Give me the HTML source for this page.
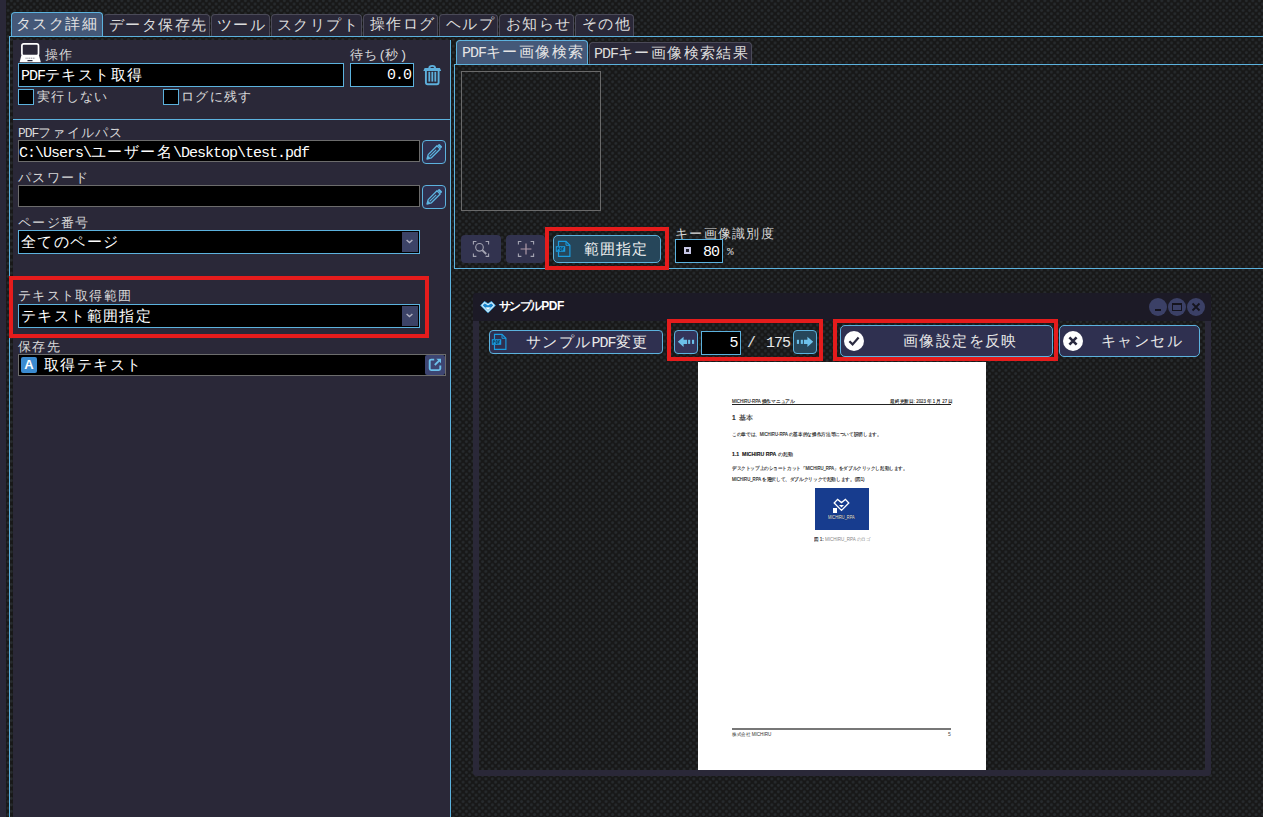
<!DOCTYPE html>
<html><head><meta charset="utf-8">
<style>
*{box-sizing:border-box;margin:0;padding:0}
html,body{width:1263px;height:817px;overflow:hidden}
body{position:relative;font-family:"Liberation Sans",sans-serif;color:#dcdcdc;
background-color:#181818;
background-image:radial-gradient(circle,#272b2e 0,#272b2e 0.9px,rgba(39,43,46,0) 2px),radial-gradient(circle,#272b2e 0,#272b2e 0.9px,rgba(39,43,46,0) 2px);
background-size:6.5px 6.488px,6.5px 6.488px;background-position:4.85px 0.76px,1.6px 4px}
.a{position:absolute}
.pat{background-color:#181818;
background-image:radial-gradient(circle,#272b2e 0,#272b2e 0.9px,rgba(39,43,46,0) 2px),radial-gradient(circle,#272b2e 0,#272b2e 0.9px,rgba(39,43,46,0) 2px);
background-size:6.5px 6.488px,6.5px 6.488px;background-position:4.85px 0.76px,1.6px 4px}
.t{position:absolute;white-space:nowrap;font-size:15px;line-height:16px;letter-spacing:1.4px}
.m{font-family:"Liberation Mono",monospace;letter-spacing:-1px}
.lb{position:absolute;white-space:nowrap;font-size:13px;line-height:13px;letter-spacing:1.25px;color:#d8d8d8}
.lb .m{letter-spacing:-1.1px}
.tab{position:absolute;top:14px;height:22px;background:#2a2838;border:1px solid #4b4a58;border-bottom:none;border-radius:4px 4px 0 0}
.tabA{background:#445878;border-color:#5cb2de}
.inp{position:absolute;background:#000;border:1px solid #5cb2de}
.inpg{position:absolute;background:#000;border:1px solid #6c6c6c}
.btn{position:absolute;background:#2f3050;border:1px solid #5cb2de;border-radius:5px}
.btnt{position:absolute;background:#26465a;border:1px solid #5cb2de;border-radius:5px}
.red{position:absolute;border:4px solid #e51c1c}
.cb{position:absolute;width:16px;height:16px;background:#000;border:1px solid #5cb2de}
.arrowbox{position:absolute;background:#3c4367}
.pt{font-size:4.6px;line-height:6px;color:#1a1a1a;white-space:nowrap;font-family:"Liberation Sans",sans-serif;-webkit-text-stroke:0.12px #1a1a1a}
</style></head><body>
<!-- left stripe -->
<div class="a" style="left:0;top:0;width:6px;height:817px;background:#2a2838"></div>
<!-- main tabs -->
<div class="tab tabA" style="left:11px;top:12px;width:92px;height:24px"></div>
<div class="tab" style="left:103px;width:107px;border-left-color:#2a2838"></div>
<div class="tab" style="left:211px;width:59px"></div>
<div class="tab" style="left:271px;width:91px"></div>
<div class="tab" style="left:363px;width:75px"></div>
<div class="tab" style="left:439px;width:59px"></div>
<div class="tab" style="left:499px;width:75px"></div>
<div class="tab" style="left:575px;width:59px"></div>
<div class="t" style="left:16px;top:16px;color:#e4e4e4">タスク詳細</div>
<div class="t" style="left:109px;top:17px">データ保存先</div>
<div class="t" style="left:217px;top:17px">ツール</div>
<div class="t" style="left:277px;top:16.5px">スクリプト</div>
<div class="t" style="left:370px;top:16px">操作ログ</div>
<div class="t" style="left:446px;top:16px">ヘルプ</div>
<div class="t" style="left:506px;top:16px">お知らせ</div>
<div class="t" style="left:582px;top:16px">その他</div>
<!-- main panel border -->
<div class="a" style="left:9px;top:36px;width:1254px;height:1px;background:#5cb2de"></div>
<div class="a" style="left:9px;top:36px;width:1px;height:781px;background:#5cb2de"></div>
<!-- left panel -->
<div class="a" style="left:13px;top:40px;width:437px;height:777px;background:#2a2838"></div>
<div class="a" style="left:450px;top:40px;width:1px;height:777px;background:#5cb2de"></div>

<!-- laptop icon -->
<svg class="a" style="left:19px;top:42px" width="23" height="21" viewBox="0 0 23 21">
<rect x="2.9" y="1.9" width="16.6" height="11.6" rx="1.8" fill="none" stroke="#fff" stroke-width="1.7"/>
<path d="M2.4 13.2 L20 13.2 L21.8 20.2 L0.6 20.2 Z" fill="#fff"/>
<path d="M6.5 16.2 h9.6" stroke="#8a8a94" stroke-width="1" stroke-dasharray="1.2 0.6"/>
<rect x="8.4" y="18.1" width="5.2" height="1.2" rx="0.5" fill="#2a2838"/>
</svg>
<div class="lb" style="left:45px;top:47.5px">操作</div>
<div class="lb" style="left:350px;top:47.5px">待ち<span class="m">(</span>秒<span class="m">)</span></div>
<div class="inp" style="left:18px;top:63px;width:326px;height:24px"></div>
<div class="t" style="left:21px;top:67px;color:#fff"><span class="m">PDF</span>テキスト取得</div>
<div class="inp" style="left:350px;top:63px;width:64px;height:24px"></div>
<div class="t m" style="left:387px;top:68px;color:#fff">0.0</div>
<!-- trash -->
<svg class="a" style="left:423px;top:64px" width="19" height="22" viewBox="0 0 19 22">
<path d="M6.2 4.4 Q6.2 1.9 9.2 1.9 Q12.2 1.9 12.2 4.4" fill="none" stroke="#5db0dc" stroke-width="1.8"/>
<path d="M0.3 6.9 L1.6 4.1 L16.9 4.1 L18.2 6.9 Z" fill="#5db0dc"/>
<path d="M2.9 7 L2.9 18.6 Q2.9 20.2 4.6 20.2 L13.9 20.2 Q15.6 20.2 15.6 18.6 L15.6 7" fill="none" stroke="#5db0dc" stroke-width="1.9"/>
<rect x="5.4" y="7.8" width="1.8" height="9.8" fill="#5db0dc"/>
<rect x="8.4" y="7.8" width="1.8" height="9.8" fill="#5db0dc"/>
<rect x="11.4" y="7.8" width="1.8" height="9.8" fill="#5db0dc"/>
</svg>
<div class="cb" style="left:18px;top:89px"></div>
<div class="lb" style="left:37px;top:89.5px">実行しない</div>
<div class="cb" style="left:163px;top:89px"></div>
<div class="lb" style="left:181px;top:89.5px">ログに残す</div>
<div class="a" style="left:13px;top:119px;width:437px;height:1px;background:#5cb2de"></div>
<div class="lb" style="left:18px;top:125.5px"><span class="m">PDF</span>ファイルパス</div>
<div class="inpg" style="left:18px;top:140px;width:402px;height:22px"></div>
<div class="t" style="left:19px;top:143.5px;color:#fff"><span class="m">C:\Users\</span>ユーザー名<span class="m">\Desktop\test.pdf</span></div>
<div class="btn" style="left:422px;top:140px;width:24px;height:24px;border-radius:4px"></div>
<svg class="a" style="left:425px;top:143px" width="18" height="18" viewBox="0 0 18 18">
<path d="M2 16 L3.2 11.6 L12 2.8 L15.2 6 L6.4 14.8 Z" fill="none" stroke="#5db4e0" stroke-width="1.3" stroke-linejoin="round"/>
<path d="M4.6 13.4 L11.2 6.8" stroke="#5db4e0" stroke-width="1.1"/>
<path d="M12.6 2.2 L13.6 1.2 Q14.2 0.6 14.8 1.2 L16.8 3.2 Q17.4 3.8 16.8 4.4 L15.8 5.4 Z" fill="#5db4e0"/>
<path d="M2 16 L3 12.8 L5.2 15 Z" fill="#5db4e0"/>
</svg>
<div class="lb" style="left:18px;top:170.5px">パスワード</div>
<div class="inpg" style="left:18px;top:185px;width:402px;height:22px"></div>
<div class="btn" style="left:422px;top:185px;width:24px;height:24px;border-radius:4px"></div>
<svg class="a" style="left:425px;top:188px" width="18" height="18" viewBox="0 0 18 18">
<path d="M2 16 L3.2 11.6 L12 2.8 L15.2 6 L6.4 14.8 Z" fill="none" stroke="#5db4e0" stroke-width="1.3" stroke-linejoin="round"/>
<path d="M4.6 13.4 L11.2 6.8" stroke="#5db4e0" stroke-width="1.1"/>
<path d="M12.6 2.2 L13.6 1.2 Q14.2 0.6 14.8 1.2 L16.8 3.2 Q17.4 3.8 16.8 4.4 L15.8 5.4 Z" fill="#5db4e0"/>
<path d="M2 16 L3 12.8 L5.2 15 Z" fill="#5db4e0"/>
</svg>
<div class="lb" style="left:18px;top:215.5px">ページ番号</div>
<div class="inp" style="left:18px;top:230px;width:402px;height:24px"></div>
<div class="arrowbox" style="left:402px;top:232px;width:16px;height:20px"></div>
<svg class="a" style="left:405px;top:238px" width="9" height="7" viewBox="0 0 9 7"><path d="M1.6 2 L4.5 4.6 L7.4 2" fill="none" stroke="#b0b0c0" stroke-width="1.4"/></svg>
<div class="t" style="left:21px;top:234px;color:#fff">全てのページ</div>
<div class="red" style="left:9px;top:276px;width:420px;height:62px"></div>
<div class="lb" style="left:18px;top:289px">テキスト取得範囲</div>
<div class="inp" style="left:18px;top:304px;width:402px;height:24px"></div>
<div class="arrowbox" style="left:402px;top:306px;width:16px;height:20px"></div>
<svg class="a" style="left:405px;top:312px" width="9" height="7" viewBox="0 0 9 7"><path d="M1.6 2 L4.5 4.6 L7.4 2" fill="none" stroke="#b0b0c0" stroke-width="1.4"/></svg>
<div class="t" style="left:21px;top:308px;color:#fff">テキスト範囲指定</div>
<div class="lb" style="left:18px;top:339.5px">保存先</div>
<div class="inpg" style="left:18px;top:354px;width:428px;height:22px"></div>
<div class="a" style="left:21px;top:357px;width:16px;height:16px;background:#3b8bd0;border-radius:2px"></div>
<div class="a" style="left:21px;top:357px;width:16px;height:16px;color:#fff;font:bold 13px/16px 'Liberation Sans',sans-serif;text-align:center">A</div>
<div class="t" style="left:44px;top:357px;color:#fff">取得テキスト</div>
<div class="arrowbox" style="left:425px;top:355px;width:20px;height:20px;border-radius:2px;background:#3d4572"></div>
<svg class="a" style="left:428px;top:358px" width="14" height="14" viewBox="0 0 14 14">
<path d="M6.2 1.6 H3.2 Q1.7 1.6 1.7 3.1 V10.6 Q1.7 12.1 3.2 12.1 H10.8 Q12.3 12.1 12.3 10.6 V7.4" fill="none" stroke="#6cc0ea" stroke-width="1.9"/>
<path d="M6.8 7 L11.4 2.4" stroke="#6cc0ea" stroke-width="1.8"/>
<path d="M8.4 0.7 L13 0.7 L13 5.3 Z" fill="#6cc0ea"/>
</svg>

<!-- nested tabs -->
<div class="tab tabA" style="left:456px;top:40px;width:132px;height:24px"></div>
<div class="tab" style="left:589px;top:42px;width:163px;height:22px"></div>
<div class="t" style="left:462px;top:44px;color:#e4e4e4"><span class="m">PDF</span>キー画像検索</div>
<div class="t" style="left:594px;top:45px"><span class="m">PDF</span>キー画像検索結果</div>
<div class="a" style="left:454px;top:64px;width:809px;height:1px;background:#5cb2de"></div>
<div class="a" style="left:454px;top:64px;width:1px;height:205px;background:#5cb2de"></div>
<div class="a" style="left:454px;top:268px;width:809px;height:1px;background:#5cb2de"></div>
<div class="a" style="left:461px;top:71px;width:140px;height:140px;border:1px solid #6a6a6a"></div>
<!-- zoom buttons -->
<div class="a" style="left:461px;top:235px;width:40px;height:28px;background:#32334f;border-radius:4px"></div>
<div class="a" style="left:506px;top:235px;width:39px;height:28px;background:#32334f;border-radius:4px"></div>
<svg class="a" style="left:472px;top:240px" width="18" height="18" viewBox="0 0 18 18">
<path d="M1.4 4.6 V1.5 H4.4 M13.6 1.5 H16.6 V4.6 M16.6 13.4 V16.4 H13.6 M4.4 16.4 H1.4 V13.4" fill="none" stroke="#a4a4b2" stroke-width="1.1"/>
<circle cx="7.5" cy="7.3" r="3.8" fill="none" stroke="#a4a4b2" stroke-width="1.1"/>
<path d="M10.3 10.1 L14.2 14" stroke="#a4a4b2" stroke-width="1.9"/>
</svg>
<svg class="a" style="left:517px;top:240px" width="18" height="18" viewBox="0 0 18 18">
<path d="M1.4 4.6 V1.5 H4.4 M13.6 1.5 H16.6 V4.6 M16.6 13.4 V16.4 H13.6 M4.4 16.4 H1.4 V13.4" fill="none" stroke="#a4a4b2" stroke-width="1.1"/>
<path d="M9 3.6 V14.4 M3.6 9 H14.4" stroke="#b09aa8" stroke-width="1.2"/>
</svg>
<div class="red" style="left:545px;top:227px;width:124px;height:43px"></div>
<div class="btnt" style="left:553px;top:235px;width:108px;height:28px"></div>
<svg class="a" style="left:555px;top:240px" width="17" height="18" viewBox="0 0 17 18">
<path d="M3.5 6 V1.4 H11 L14.9 5.3 V16.4 H3.5 V11.8" fill="none" stroke="#1a9ce0" stroke-width="1.15"/>
<path d="M11 1.4 V5.3 H14.9" fill="none" stroke="#1a9ce0" stroke-width="1"/>
<rect x="0.8" y="6.2" width="9.4" height="5.6" fill="#1a9ce0"/>
<path d="M2.2 7.6 v3 M2.2 7.6 h1.2 v1.3 h-1.2 M5 7.6 v3 h1.2 v-3 h-1.2 M7.6 7.6 v3 M7.6 7.6 h1.3 M7.6 9 h1" fill="none" stroke="#0f2d45" stroke-width="0.7"/>
</svg>
<div class="t" style="left:584px;top:241px;color:#f0f0f0;letter-spacing:1px">範囲指定</div>
<div class="lb" style="left:675px;top:226.5px">キー画像識別度</div>
<div class="inp" style="left:675px;top:239px;width:48px;height:24px"></div>
<div class="a" style="left:684px;top:247px;width:7px;height:7px;background:#c8c8e6"></div>
<div class="a" style="left:686px;top:249px;width:3px;height:3px;background:#20202c"></div>
<div class="t m" style="left:703px;top:245px;color:#fff">80</div>
<div class="lb m" style="left:727px;top:246px;font-size:11px">%</div>
<!-- dialog -->
<div class="a" style="left:473px;top:293px;width:738px;height:28px;background:#1c1a26;border-radius:3px 3px 0 0"></div>
<div class="a" style="left:473px;top:321px;width:738px;height:455px;border:6px solid #2a2838;border-top:none;border-radius:0 0 4px 4px"></div>
<svg class="a" style="left:478px;top:298px" width="20" height="18" viewBox="0 0 20 18">
<path d="M2.2 7.4 L6.5 2.9 L10 5.3 L13.5 2.9 L17.8 7.4 L10 15.2 Z" fill="#49aee6"/>
<path d="M3.9 7.4 L6.6 4.6 L10 6.9 L13.4 4.6 L16.1 7.4 L10 13.5 Z" fill="#1684cc" stroke="#dff2fb" stroke-width="1.1" stroke-linejoin="round"/>
<path d="M6.3 9.6 L13.7 9.6 L10 13.3 Z" fill="#9ad6f2"/>
<path d="M7.8 9.6 L12.2 9.6 L10 11.6 Z" fill="#fff"/>
</svg>
<div class="a" style="left:499px;top:299px;white-space:nowrap;font-size:12px;line-height:15px;font-weight:bold;color:#fff;letter-spacing:-1.7px">サンプル<span style="font-family:'Liberation Sans';letter-spacing:-0.4px;margin-left:1px">PDF</span></div>
<div class="a" style="left:1149px;top:298px;width:18px;height:18px;border-radius:50%;background:#3b4066"></div>
<div class="a" style="left:1168px;top:298px;width:18px;height:18px;border-radius:50%;background:#3b4066"></div>
<div class="a" style="left:1187px;top:298px;width:18px;height:18px;border-radius:50%;background:#3b4066"></div>
<div class="a" style="left:1155px;top:309px;width:6px;height:1.5px;background:#15141e"></div>
<div class="a" style="left:1172px;top:303px;width:10px;height:8px;border:1px solid #15141e;border-top-width:2px"></div>
<svg class="a" style="left:1191px;top:302px" width="10" height="10" viewBox="0 0 10 10"><path d="M1.5 1.5 L8.5 8.5 M8.5 1.5 L1.5 8.5" stroke="#15141e" stroke-width="1.8"/></svg>
<div class="btn" style="left:489px;top:330px;width:174px;height:24px;border-radius:4px"></div>
<svg class="a" style="left:491px;top:333px" width="17" height="18" viewBox="0 0 17 18">
<path d="M3.5 6 V1.4 H11 L14.9 5.3 V16.4 H3.5 V11.8" fill="none" stroke="#1a9ce0" stroke-width="1.15"/>
<path d="M11 1.4 V5.3 H14.9" fill="none" stroke="#1a9ce0" stroke-width="1"/>
<rect x="0.8" y="6.2" width="9.4" height="5.6" fill="#1a9ce0"/>
<path d="M2.2 7.6 v3 M2.2 7.6 h1.2 v1.3 h-1.2 M5 7.6 v3 h1.2 v-3 h-1.2 M7.6 7.6 v3 M7.6 7.6 h1.3 M7.6 9 h1" fill="none" stroke="#0f2d45" stroke-width="0.7"/>
</svg>
<div class="t" style="left:526px;top:334px;color:#e8e8e8">サンプル<span class="m">PDF</span>変更</div>
<div class="red" style="left:667px;top:319px;width:156px;height:42px"></div>
<div class="btn" style="left:674px;top:330px;width:24px;height:24px;border-radius:4px;background:#33345a"></div>
<svg class="a" style="left:677px;top:335px" width="18" height="14" viewBox="0 0 18 14">
<path d="M0.8 6.85 L6.6 1.7 V4.8 H10.1 V8.9 H6.6 V12 Z" fill="#6cc0ea"/>
<rect x="11.1" y="4.8" width="2.1" height="4.1" fill="#6cc0ea"/><rect x="15" y="4.8" width="2.1" height="4.1" fill="#6cc0ea"/>
</svg>
<div class="inp" style="left:701px;top:331px;width:40px;height:24px"></div>
<div class="t m" style="left:729.5px;top:336px;color:#fff">5</div>
<div class="t m" style="left:747px;top:336px;color:#e0e0e0">/</div>
<div class="t m" style="left:766px;top:336px;color:#e8e8e8">175</div>
<div class="btnt" style="left:793px;top:330px;width:24px;height:24px;border-radius:4px"></div>
<svg class="a" style="left:796px;top:335px" width="18" height="14" viewBox="0 0 18 14"><g transform="translate(18,0) scale(-1,1)">
<path d="M0.8 6.85 L6.6 1.7 V4.8 H10.1 V8.9 H6.6 V12 Z" fill="#6cc0ea"/>
<rect x="11.1" y="4.8" width="2.1" height="4.1" fill="#6cc0ea"/><rect x="15" y="4.8" width="2.1" height="4.1" fill="#6cc0ea"/>
</g></svg>
<div class="red" style="left:833px;top:319px;width:225px;height:42px"></div>
<div class="btn" style="left:840px;top:325px;width:213px;height:32px"></div>
<svg class="a" style="left:843px;top:330px" width="22" height="22" viewBox="0 0 22 22">
<circle cx="11" cy="11" r="10" fill="#fff"/>
<path d="M6.4 11.2 L9.6 14.4 L15.6 7.6" fill="none" stroke="#2a2a40" stroke-width="2.2"/>
</svg>
<div class="t" style="left:903px;top:333px;color:#e8e8e8">画像設定を反映</div>
<div class="btn" style="left:1059px;top:325px;width:141px;height:32px"></div>
<svg class="a" style="left:1062px;top:330px" width="22" height="22" viewBox="0 0 22 22">
<circle cx="11" cy="11" r="10" fill="#fff"/>
<path d="M7.4 7.4 L14.6 14.6 M14.6 7.4 L7.4 14.6" stroke="#2a2a40" stroke-width="2.6"/>
</svg>
<div class="t" style="left:1101px;top:333px;color:#e8e8e8">キャンセル</div>
<!-- pdf page -->
<div class="a" style="left:698px;top:362px;width:288px;height:408px;background:#fff"></div>

<div class="a pt" style="left:732px;top:399px;transform:scaleX(0.95);transform-origin:0 0">MICHIRU-RPA 操作マニュアル</div>
<div class="a pt" style="left:833px;width:120px;text-align:right;top:399px;transform:scaleX(0.936);transform-origin:100% 0">最終更新日: 2023 年 1 月 27 日</div>
<div class="a" style="left:732px;top:404px;width:219px;height:1px;background:#222"></div>
<div class="a pt" style="left:732px;top:413px;font-size:6.6px;line-height:9px;color:#333"><b>1</b>&nbsp; 基本</div>
<div class="a pt" style="left:732px;top:432px;transform:scaleX(0.927);transform-origin:0 0">この章では、MICHIRU-RPA の基本的な操作方法等について説明します。</div>
<div class="a pt" style="left:732px;top:451px;font-size:5.2px;font-weight:bold;color:#111">1.1&nbsp; MICHIRU RPA <span style="font-weight:normal">の起動</span></div>
<div class="a pt" style="left:732px;top:466px;transform:scaleX(0.918);transform-origin:0 0">デスクトップ上のショートカット「MICHIRU_RPA」をダブルクリックし起動します。</div>
<div class="a pt" style="left:732px;top:477px;transform:scaleX(0.927);transform-origin:0 0">MICHIRU_RPA を選択して、ダブルクリックで起動します。(図1)</div>
<div class="a" style="left:815px;top:488px;width:54px;height:42px;background:#173c8e"></div>
<svg class="a" style="left:833px;top:498px" width="17" height="14" viewBox="0 0 17 14">
<path d="M1.2 5 L4.6 1.4 L8.5 4.6 L12.4 1.4 L15.8 5 L8.5 12.4 Z" fill="none" stroke="#fff" stroke-width="1.3"/>
<path d="M6 7 L11 7 L8.5 9.4 Z" fill="#fff"/>
</svg>
<div class="a" style="left:833px;top:508px;width:4px;height:5px;background:#fff"></div>
<div class="a" style="left:828px;top:514px;font-size:5px;line-height:6px;color:#eee;white-space:nowrap;font-family:'Liberation Sans',sans-serif;transform:scaleX(0.78);transform-origin:0 0;text-shadow:0 0 1px #000">MICHIRU_RPA</div>
<div class="a" style="left:814px;top:536px;font-size:5px;line-height:7px;color:#888;white-space:nowrap;font-family:'Liberation Sans',sans-serif;transform:scaleX(0.9);transform-origin:0 0"><span style="color:#444;font-weight:bold">図 1:</span> MICHIRU_RPA のロゴ</div>
<div class="a" style="left:732px;top:728px;width:219px;height:1.5px;background:#777"></div>
<div class="a" style="left:732px;top:731px;font-size:5px;line-height:6px;color:#333;white-space:nowrap;font-family:'Liberation Sans',sans-serif;transform:scaleX(0.92);transform-origin:0 0">株式会社 MICHIRU</div>
<div class="a" style="left:948px;top:731px;font-size:5px;line-height:6px;color:#444;white-space:nowrap;font-family:'Liberation Sans',sans-serif">5</div>
</body></html>
